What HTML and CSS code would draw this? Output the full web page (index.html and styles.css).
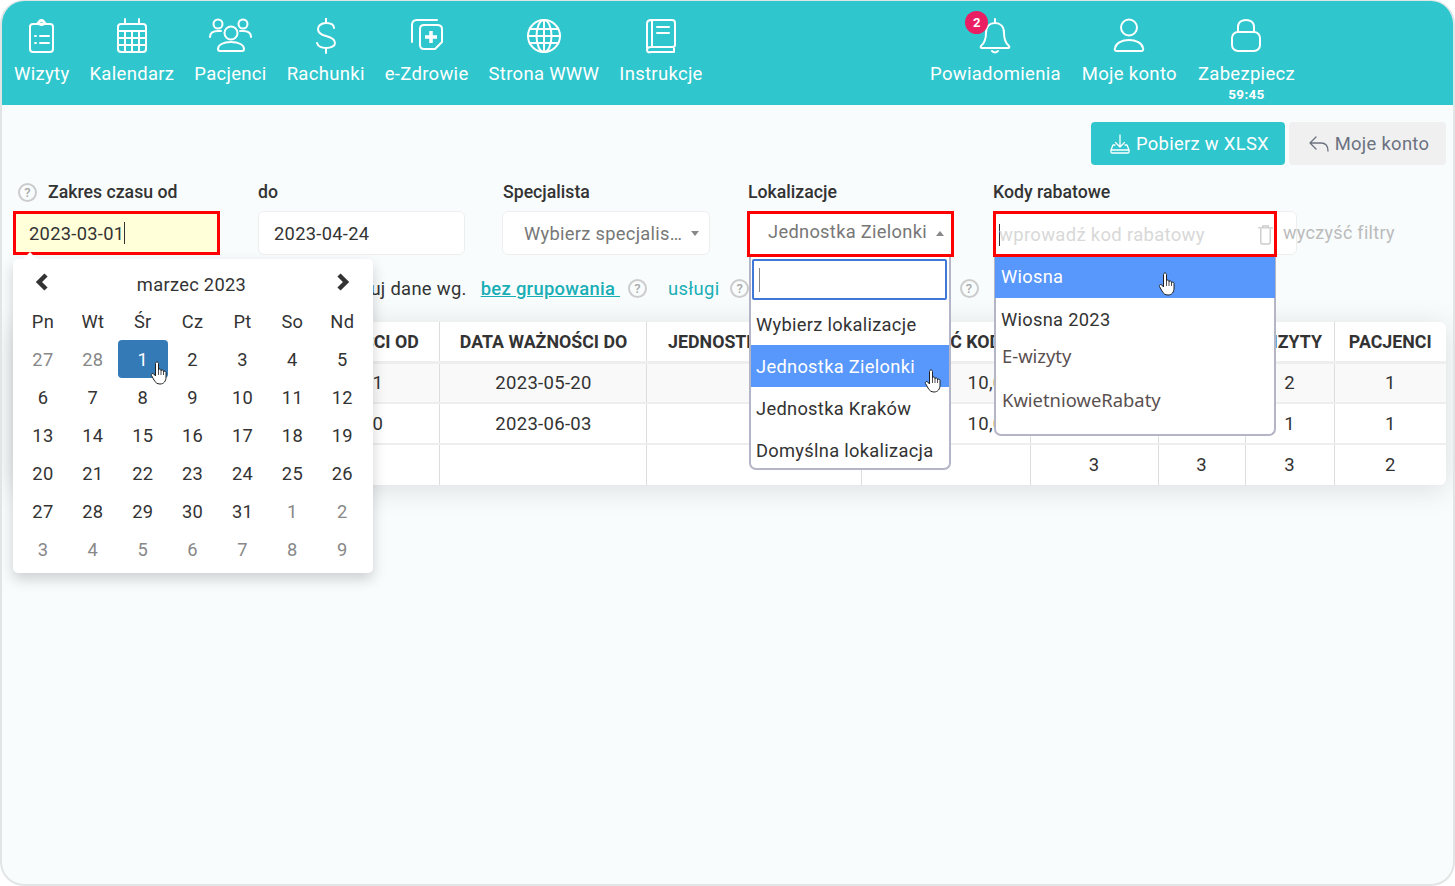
FILE: index.html
```html
<!DOCTYPE html>
<html lang="pl">
<head>
    <meta charset="UTF-8">
    <title>Kody rabatowe - raport</title>
    <link rel="stylesheet" href="styles.css">
</head>
<body>
<div class="window">
    <!-- Top navigation -->
    <header class="topbar">
        <nav class="nav-group">
            <a class="nav-item">
                <svg class="nav-icon" viewBox="0 0 36 36"><rect x="6" y="6" width="23" height="28" rx="3"/><path d="M13 6a5 5 0 0 1 9 0"/><circle cx="17.5" cy="4.5" r="2.5"/><path d="M11 18h1M16 18h9M11 25h1M16 25h9"/></svg>
                <span>Wizyty</span>
            </a>
            <a class="nav-item">
                <svg class="nav-icon" viewBox="0 0 36 36"><rect x="4" y="6" width="28" height="28" rx="3"/><path d="M11 1v5M25 1v5M4 13h28M4 20h28M4 27h28M11 13v21M18 13v21M25 13v21"/></svg>
                <span>Kalendarz</span>
            </a>
            <a class="nav-item">
                <svg class="nav-icon" viewBox="0 0 46 36"><circle cx="11" cy="6" r="4.500"/><circle cx="36" cy="6" r="4.500"/><circle cx="24" cy="15" r="6.500"/><path d="M3 19c0-4 3-6 8-6h3M44 19c0-4-3-6-8-6h-3M13 33c-2 0-2-1-2-2 0-4 5-7 13-7s13 3 13 7c0 1 0 2-2 2z"/></svg>
                <span>Pacjenci</span>
            </a>
            <a class="nav-item">
                <svg class="nav-icon" viewBox="0 0 36 36"><path d="M26 10c0-3-3-5-8-5s-8 3-8 6c0 4 4 6 8 7s9 3 9 7c0 3-4 5-9 5s-8-2-9-5M18 0v5M18 30v5"/></svg>
                <span>Rachunki</span>
            </a>
            <a class="nav-item">
                <svg class="nav-icon" viewBox="0 0 36 36"><path d="M3 24V7q0-5 5-5h20M15 7h13q5 0 5 4v13l-7 7H15q-4 0-4-4V11q0-4 4-4z"/><path class="thick" d="M22 13v12M16 19h12"/></svg>
                <span>e-Zdrowie</span>
            </a>
            <a class="nav-item">
                <svg class="nav-icon" viewBox="0 0 36 36"><circle cx="18" cy="18" r="16"/><ellipse cx="18" cy="18" rx="7.500" ry="16"/><path d="M18 2v32M4 11h28M4 25h28M2 18h32"/></svg>
                <span>Strona WWW</span>
            </a>
            <a class="nav-item">
                <svg class="nav-icon" viewBox="0 0 36 36"><path d="M4 30V6q0-4 4-4h21q3 0 3 3v22q0 2-3 2H8q-4 0-4 3t4 2h23v-4M9 2v27M14 9h12M14 15h12"/></svg>
                <span>Instrukcje</span>
            </a>
        </nav>
        <nav class="nav-group nav-right">
            <a class="nav-item">
                <span class="bell">
                    <svg class="nav-icon" viewBox="0 0 36 36"><path d="M4 28q5-4 5-13C9 8 13 5 18 5s9 3 9 10q0 9 5 13 1 2-1 2H5q-2 0-1-2zM18 5V1M15 33q3 3 6 0"/></svg>
                    <b class="badge">2</b>
                </span>
                <span>Powiadomienia</span>
            </a>
            <a class="nav-item">
                <svg class="nav-icon" viewBox="0 0 36 36"><circle cx="18" cy="9.500" r="8"/><path d="M6 33q-3 0-2-3c1-5 7-8 14-8s13 3 14 8q1 3-2 3z"/></svg>
                <span>Moje konto</span>
            </a>
            <a class="nav-item">
                <svg class="nav-icon" viewBox="0 0 36 36"><rect x="4" y="14" width="28" height="19" rx="6"/><path d="M10 14V9c0-5 4-7 8-7s8 2 8 7v5"/></svg>
                <span>Zabezpiecz</span>
                <small class="timer">59:45</small>
            </a>
        </nav>
    </header>

    <main class="content">
        <div class="toolbar">
            <button class="btn btn-teal">
                <svg class="btn-icon" viewBox="0 0 22 22"><path d="M11 2v12M6.500 9.500 11 14l4.500-4.500M6 12H4l-2 5v2q0 1 1 1h16q1 0 1-1v-2l-2-5h-2M2 17h18"/></svg>
                Pobierz w XLSX
            </button>
            <button class="btn btn-grey">
                <svg class="btn-icon" viewBox="0 0 22 22"><path d="M8 4 2 10l6 6M2 10h11q7 0 7 8"/></svg>
                Moje konto
            </button>
        </div>

        <!-- Filters -->
        <div class="filters">
            <div class="field">
                <label class="field-label"><i class="help">?</i>Zakres czasu od</label>
                <div class="control control-active marked">2023-03-01<span class="caret"></span></div>

                <div class="calendar">
                    <div class="cal-head">
                        <svg class="cal-arrow" viewBox="0 0 14 18"><path d="M11 2 4 9l7 7"/></svg>
                        <span>marzec 2023</span>
                        <svg class="cal-arrow" viewBox="0 0 14 18"><path d="m3 2 7 7-7 7"/></svg>
                    </div>
                    <div class="cal-grid">
                        <span>Pn</span><span>Wt</span><span>Śr</span><span>Cz</span><span>Pt</span><span>So</span><span>Nd</span>
                        <span class="old">27</span><span class="old">28</span><span class="today">1<svg class="hand hand-day" viewBox="0 0 18 24"><use href="#hand"/></svg></span><span>2</span><span>3</span><span>4</span><span>5</span>
                        <span>6</span><span>7</span><span>8</span><span>9</span><span>10</span><span>11</span><span>12</span>
                        <span>13</span><span>14</span><span>15</span><span>16</span><span>17</span><span>18</span><span>19</span>
                        <span>20</span><span>21</span><span>22</span><span>23</span><span>24</span><span>25</span><span>26</span>
                        <span>27</span><span>28</span><span>29</span><span>30</span><span>31</span><span class="old">1</span><span class="old">2</span>
                        <span class="old">3</span><span class="old">4</span><span class="old">5</span><span class="old">6</span><span class="old">7</span><span class="old">8</span><span class="old">9</span>
                    </div>
                </div>
            </div>

            <div class="field">
                <label class="field-label">do</label>
                <div class="control">2023-04-24</div>
            </div>

            <div class="field">
                <label class="field-label">Specjalista</label>
                <div class="control control-select control-spec">Wybierz specjalis…<i class="arrow-down"></i></div>
            </div>

            <div class="field">
                <label class="field-label">Lokalizacje</label>
                <div class="control control-select control-open marked">Jednostka Zielonki<i class="arrow-up"></i></div>

                <div class="dropdown dropdown-loc">
                    <div class="drop-search"><span class="caret"></span></div>
                    <div class="drop-option">Wybierz lokalizacje</div>
                    <div class="drop-option drop-hover">Jednostka Zielonki<svg class="hand hand-loc" viewBox="0 0 18 24"><use href="#hand"/></svg></div>
                    <div class="drop-option">Jednostka Kraków</div>
                    <div class="drop-option">Domyślna lokalizacja</div>
                </div>
            </div>

            <div class="field field-code">
                <label class="field-label">Kody rabatowe</label>
                <div class="code-row">
                    <div class="control control-code">
                        <span class="caret"></span><span class="placeholder">wprowadź kod rabatowy</span>
                        <svg class="trash" viewBox="0 0 18 22"><path d="M4 5v14q0 2 2 2h6q2 0 2-2V5M1 4h16M6 4V2h6v2"/></svg>
                    </div>
                    <div class="code-mark"></div>
                    <a class="clear-link">wyczyść filtry</a>
                </div>

                <div class="dropdown dropdown-code">
                    <div class="code-option drop-hover">Wiosna<svg class="hand hand-code" viewBox="0 0 18 24"><use href="#hand"/></svg></div>
                    <div class="code-option code-short">Wiosna 2023</div>
                    <div class="code-option code-alt">E-wizyty</div>
                    <div class="code-option code-alt">KwietnioweRabaty</div>
                </div>
            </div>
        </div>

        <div class="grouping">
            <span>Grupuj dane wg.</span>
            <a class="group-link group-current">bez grupowania </a><i class="help">?</i>
            <a class="group-link group-next">usługi</a><i class="help">?</i>
            <a class="group-link group-hidden">lokalizacji</a><i class="help">?</i>
        </div>

        <!-- Report table -->
        <table class="report">
            <colgroup>
                <col class="c1"><col class="c2"><col class="c3"><col class="c4"><col class="c5"><col class="c6"><col class="c7"><col class="c8"><col class="c9">
            </colgroup>
            <thead>
                <tr>
                    <th>KOD RABATOWY</th>
                    <th>DATA WAŻNOŚCI OD</th>
                    <th>DATA WAŻNOŚCI DO</th>
                    <th>JEDNOSTKA WIZYTY</th>
                    <th>WARTOŚĆ KODU</th>
                    <th>UŻYCIA</th>
                    <th>SUMA</th>
                    <th>WIZYTY</th>
                    <th>PACJENCI</th>
                </tr>
            </thead>
            <tbody>
                <tr class="row-odd">
                    <td>Wiosna</td><td>2023-03-01</td><td>2023-05-20</td><td>1</td><td class="cell-value">10,00 zł</td><td>2</td><td>2</td><td>2</td><td>1</td>
                </tr>
                <tr>
                    <td>Wiosna 2023</td><td>2023-03-10</td><td>2023-06-03</td><td>1</td><td class="cell-value">10,00 zł</td><td>1</td><td>1</td><td>1</td><td>1</td>
                </tr>
                <tr>
                    <td></td><td></td><td></td><td></td><td></td><td>3</td><td>3</td><td>3</td><td>2</td>
                </tr>
            </tbody>
        </table>
    </main>
</div>

<!-- mouse pointer used in three places -->
<svg class="defs" width="0" height="0">
    <symbol id="hand" viewBox="0 0 18 24">
        <path fill="#fff" stroke="#222" stroke-width="1" d="M5.500 2.500C5.500.5 8.500.5 8.500 2.500V9C8.500 7.600 11 7.600 11 9.200V10C11 8.600 13.500 8.600 13.500 10.200V11C13.500 9.800 16 9.800 16 11.400V16C16 20 14 23 10 23 7 23 5.500 21.500 4 19L1.500 14.500C.8 13 2.600 11.800 3.800 13L5.500 15Z"/>
        <path fill="none" stroke="#222" stroke-width=".8" d="M8.500 9v5M11 10v4M13.500 11v3"/>
    </symbol>
</svg>
</body>
</html>
```

FILE: styles.css
```css
/* Global */
* {
    box-sizing: border-box;
}

body {
    margin: 0;
    background: #fff;
    font-family: Roboto, sans-serif;
    color: #333;
}

.window {
    width: 1455px;
    height: 886px;
    background: #f8fcfd;
    border: 2px solid #e2e5e6;
    border-top: 1px solid #e2e5e6;
    border-radius: 24px;
    overflow: hidden;
}

.defs {
    position: absolute;
}

/* Top navigation */
.topbar {
    display: flex;
    height: 104px;
    margin: 0 -2px;
    padding: 17px 160px 0 14px;
    background: #2fc6cd;
    color: #fff;
}

.nav-group {
    display: flex;
    gap: 20px;
}

.nav-right {
    margin-left: auto;
    gap: 21px;
}

.nav-item {
    display: flex;
    flex-direction: column;
    align-items: center;
    font-size: 18.500px;
    letter-spacing: .3px;
    line-height: 24px;
}

.nav-icon {
    display: block;
    height: 36px;
    margin-bottom: 8px;
    fill: none;
    stroke: #fff;
    stroke-width: 2;
    stroke-linecap: round;
    stroke-linejoin: round;
}

.nav-icon .thick {
    stroke-width: 3.500;
    stroke-linecap: butt;
}

.bell {
    position: relative;
}

.badge {
    position: absolute;
    left: -12px;
    top: -7px;
    width: 23px;
    height: 23px;
    border-radius: 50%;
    background: #e91e63;
    font-size: 13px;
    line-height: 23px;
    text-align: center;
}

.timer {
    margin-top: 0;
    font-size: 13.500px;
    line-height: 16px;
    font-weight: 700;
}

/* Content */
.content {
    padding: 17px 7px 0 11px;
}

.toolbar {
    display: flex;
    justify-content: flex-end;
    gap: 4px;
    height: 43px;
    margin-bottom: 15px;
}

.btn {
    display: flex;
    align-items: center;
    justify-content: center;
    gap: 5px;
    height: 43px;
    padding: 0 0 0 2px;
    border: none;
    border-radius: 4px;
    font-family: inherit;
    font-size: 18.400px;
    letter-spacing: .3px;
}

.btn-teal {
    width: 194px;
    background: #2fc6cd;
    color: #fff;
}

.btn-grey {
    width: 157px;
    background: #f0f0f0;
    color: #6b7280;
}

.btn-icon {
    width: 22px;
    height: 22px;
    fill: none;
    stroke: currentColor;
    stroke-width: 1.300;
    stroke-linejoin: round;
    stroke-linecap: round;
}

/* Filters */
.filters {
    display: flex;
    height: 75px;
}

.field {
    position: relative;
    width: 245px;
    padding-right: 38px;
}

.field-code {
    width: auto;
    padding: 0;
}

.field-label {
    display: flex;
    align-items: center;
    height: 24px;
    margin-bottom: 7px;
    font-size: 17.700px;
    font-weight: 500;
}

.help {
    flex: none;
    display: inline-block;
    width: 19px;
    height: 19px;
    border: 2px solid #ccc;
    border-radius: 50%;
    color: #aaa;
    font-size: 13px;
    font-style: normal;
    font-weight: 500;
    line-height: 15px;
    text-align: center;
}

.field-label .help {
    margin: 0 11px 0 5px;
}

.control {
    display: flex;
    align-items: center;
    height: 44px;
    padding: 0 15px;
    background: #fff;
    border: 1px solid #eee;
    border-radius: 6px;
    font-size: 18.300px;
    letter-spacing: .3px;
}

.marked {
    border: 3px solid #f00;
    border-radius: 0;
    padding-left: 13px;
}

.control-active {
    background: #ffffd9;
}

.caret {
    display: inline-block;
    width: 1px;
    height: 22px;
    background: #333;
}

.control-select {
    padding: 0 12px 0 21px;
    color: #777;
    justify-content: space-between;
}

.control-spec {
    margin-left: -1px;
    padding-right: 10px;
}

.control-open {
    width: 207px;
    height: 46px;
    margin-left: -1px;
    padding: 0 7px 5px 18px;
}

.arrow-down,
.arrow-up {
    width: 0;
    height: 0;
    border-left: 4px solid transparent;
    border-right: 4px solid transparent;
}

.arrow-down {
    border-top: 5px solid #888;
}

.arrow-up {
    margin-top: 3px;
    border-bottom: 5px solid #888;
}

.code-row {
    display: flex;
    align-items: center;
    position: relative;
    width: 452px;
}

.control-code {
    width: 304px;
    padding: 4px 0 0 5px;
    flex: none;
}

.control-code .caret {
    margin: 0 -1px 0 0;
}

.placeholder {
    color: #d8d8d8;
    font-size: 18.500px;
}

.trash {
    position: absolute;
    left: 264px;
    top: 13px;
    width: 17px;
    height: 21px;
    fill: none;
    stroke: #ccc;
    stroke-width: 1.500;
}

.code-mark {
    position: absolute;
    left: 0;
    top: 0;
    width: 284px;
    height: 46px;
    border: 3px solid #f00;
}

.clear-link {
    position: absolute;
    left: 290px;
    top: 11px;
    color: #bbb;
    font-size: 18px;
    letter-spacing: .3px;
}

/* Datepicker */
.calendar {
    position: absolute;
    z-index: 5;
    left: 0;
    top: 79px;
    width: 360px;
    height: 314px;
    padding: 5px 4px 0 5px;
    background: #fff;
    border-radius: 5px;
    box-shadow: 0 6px 14px rgba(0, 0, 0, .18);
}

.calendar::before {
    content: "";
    position: absolute;
    left: 10px;
    top: -7px;
    border-left: 7px solid transparent;
    border-right: 7px solid transparent;
    border-bottom: 7px solid #fff;
}

.cal-head {
    display: flex;
    justify-content: space-between;
    align-items: center;
    height: 38px;
    padding: 0 19px 0 17px;
    font-size: 18.300px;
    letter-spacing: .3px;
}

.cal-head span {
    padding: 2px 2px 0 0;
}

.cal-arrow {
    width: 14px;
    height: 18px;
    margin-bottom: 2px;
    fill: none;
    stroke: #333;
    stroke-width: 4.500;
}

.cal-grid {
    display: grid;
    grid-template-columns: repeat(7, 49.900px);
    grid-auto-rows: 38px;
    font-size: 18.300px;
    letter-spacing: .3px;
}

.cal-grid span {
    position: relative;
    display: flex;
    align-items: center;
    justify-content: center;
    border-radius: 4px;
}

.cal-grid .old {
    color: #888;
}

.cal-grid .today {
    background: #337ab7;
    color: #fff;
}

/* Dropdowns */
.dropdown {
    position: absolute;
    z-index: 4;
    top: 77px;
    background: #fff;
    border: 2px solid #b5b5c8;
    border-top: none;
    border-radius: 0 0 7px 7px;
    font-size: 18.300px;
    letter-spacing: .3px;
}

.dropdown-loc {
    left: 1px;
    width: 202px;
    height: 213px;
}

.dropdown-code {
    left: 1px;
    width: 282px;
    height: 179px;
}

.drop-search {
    display: flex;
    align-items: center;
    height: 41px;
    margin: 2px 2px 3px 1px;
    padding-left: 5px;
    border: 2px solid #3f78d6;
    border-radius: 2px;
}

.drop-search .caret {
    height: 24px;
    background: #888;
}

.drop-option {
    position: relative;
    height: 42px;
    padding-left: 5px;
    line-height: 44px;
}

.drop-hover {
    background: #5897fb;
    color: #fff;
}

.code-option {
    position: relative;
    height: 41px;
    padding-left: 5px;
    line-height: 39px;
}

.dropdown-code .drop-hover {
    margin: 0 -1px;
    padding-left: 6px;
}

.code-option.code-short {
    height: 36px;
    line-height: 44px;
}

.code-option.code-alt {
    height: 44px;
    padding-left: 6px;
    line-height: 44px;
    font-family: "Noto Sans", sans-serif;
    font-size: 18.400px;
    letter-spacing: 0;
    color: #5a5050;
}

.hand {
    position: absolute;
    width: 18px;
    height: 24px;
}

.hand-day {
    left: 32px;
    top: 21px;
}

.hand-loc {
    left: 173px;
    top: 24px;
}

.hand-code {
    left: 163px;
    top: 15px;
}

/* Grouping row */
.grouping {
    display: flex;
    align-items: center;
    height: 26px;
    margin: 20px 0 21px;
    padding-left: 317px;
    font-size: 18.400px;
    letter-spacing: .3px;
}

.group-link {
    color: #19aeb5;
    margin-left: 14px;
}

.group-current {
    font-weight: 500;
    text-decoration: underline;
    white-space: pre;
}

.grouping .help {
    margin-left: 8px;
}

.grouping .group-next {
    margin-left: 21px;
}

.group-next + .help {
    margin-left: 11px;
}

.grouping .group-hidden {
    margin-left: 100px;
}

.grouping .group-hidden + .help {
    margin-left: 26px;
}

/* Table */
.report {
    width: 1433px;
    table-layout: fixed;
    border-collapse: collapse;
    background: #fff;
    border-radius: 6px;
    box-shadow: 0 4px 30px rgba(0, 0, 0, .12);
    font-size: 18.500px;
    letter-spacing: .3px;
}

.c1 { width: 218px; }
.c2 { width: 208px; }
.c3 { width: 207px; }
.c4 { width: 215px; }
.c5 { width: 169px; }
.c6 { width: 128px; }
.c7 { width: 87px; }
.c8 { width: 89px; }
.c9 { width: 112px; }

.report th,
.report td {
    padding: 0;
    text-align: center;
    border-left: 1px solid #ddd;
    white-space: nowrap;
}

.report th:first-child,
.report td:first-child {
    border-left: none;
}

.report th:nth-child(3),
.report td:nth-child(3) {
    padding-left: 2px;
}

.report th {
    height: 40px;
    border-bottom: 3px solid #eee;
    font-size: 17.800px;
    font-weight: 700;
    letter-spacing: 0;
}

.report td {
    height: 41px;
    border-bottom: 2px solid #eee;
}

.report tbody tr:last-child td {
    height: 41px;
    border-bottom: none;
}

.report .cell-value {
    padding-left: 106px;
    text-align: left;
}

.row-odd {
    background: #f9f9f9;
}
```
